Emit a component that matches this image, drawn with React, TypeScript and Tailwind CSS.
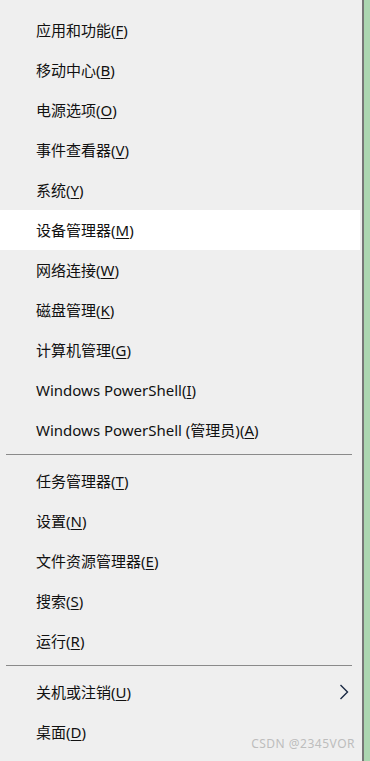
import React from 'react'

type Item = { label: string; key: string; hover?: boolean; arrow?: boolean }

const groups: Item[][] = [
  [
    { label: '应用和功能', key: 'F' },
    { label: '移动中心', key: 'B' },
    { label: '电源选项', key: 'O' },
    { label: '事件查看器', key: 'V' },
    { label: '系统', key: 'Y' },
    { label: '设备管理器', key: 'M', hover: true },
    { label: '网络连接', key: 'W' },
    { label: '磁盘管理', key: 'K' },
    { label: '计算机管理', key: 'G' },
    { label: 'Windows PowerShell', key: 'I' },
    { label: 'Windows PowerShell (管理员)', key: 'A' },
  ],
  [
    { label: '任务管理器', key: 'T' },
    { label: '设置', key: 'N' },
    { label: '文件资源管理器', key: 'E' },
    { label: '搜索', key: 'S' },
    { label: '运行', key: 'R' },
  ],
  [
    { label: '关机或注销', key: 'U', arrow: true },
    { label: '桌面', key: 'D' },
  ],
]

const MenuRow = ({ item }: { item: Item }) => (
  <div
    className={`flex items-center h-10 pl-9 pr-3 mr-[2px] ${item.hover ? 'bg-white' : ''}`}
  >
    <span className="flex-1 text-[15px] text-[#111] leading-none">
      {item.label}(<span className="underline underline-offset-2">{item.key}</span>)
    </span>
    {item.arrow && (
      <svg width="10" height="16" viewBox="0 0 10 16" className="mr-[-1px]">
        <path d="M1.5 1 L8.5 8 L1.5 15" fill="none" stroke="#1b2a44" strokeWidth="1.4" />
      </svg>
    )}
  </div>
)

export default function App() {
  return (
    <div
      className="relative flex w-[370px] h-[761px] overflow-hidden bg-[#efefef]"
      style={{ fontFamily: '"Noto Sans", "Noto Sans CJK SC", sans-serif' }}
    >
      <div className="w-[364px] pt-[10px] border-r-2 border-[#777777]">
        {groups.map((group, gi) => (
          <div key={gi}>
            {gi > 0 && (
              <div className="pt-[4px] pb-[6px] pl-[6px] pr-[10px]">
                <div className="h-px bg-[#8a8a8a]" />
              </div>
            )}
            {group.map((item) => (
              <MenuRow key={item.key} item={item} />
            ))}
          </div>
        ))}
      </div>
      <div className="flex-1 bg-[#acd6b1]" />
      <div className="absolute right-[15px] bottom-[8px] text-[12px] tracking-[0.5px] text-[#bdbdbd]">
        CSDN @2345VOR
      </div>
    </div>
  )
}
